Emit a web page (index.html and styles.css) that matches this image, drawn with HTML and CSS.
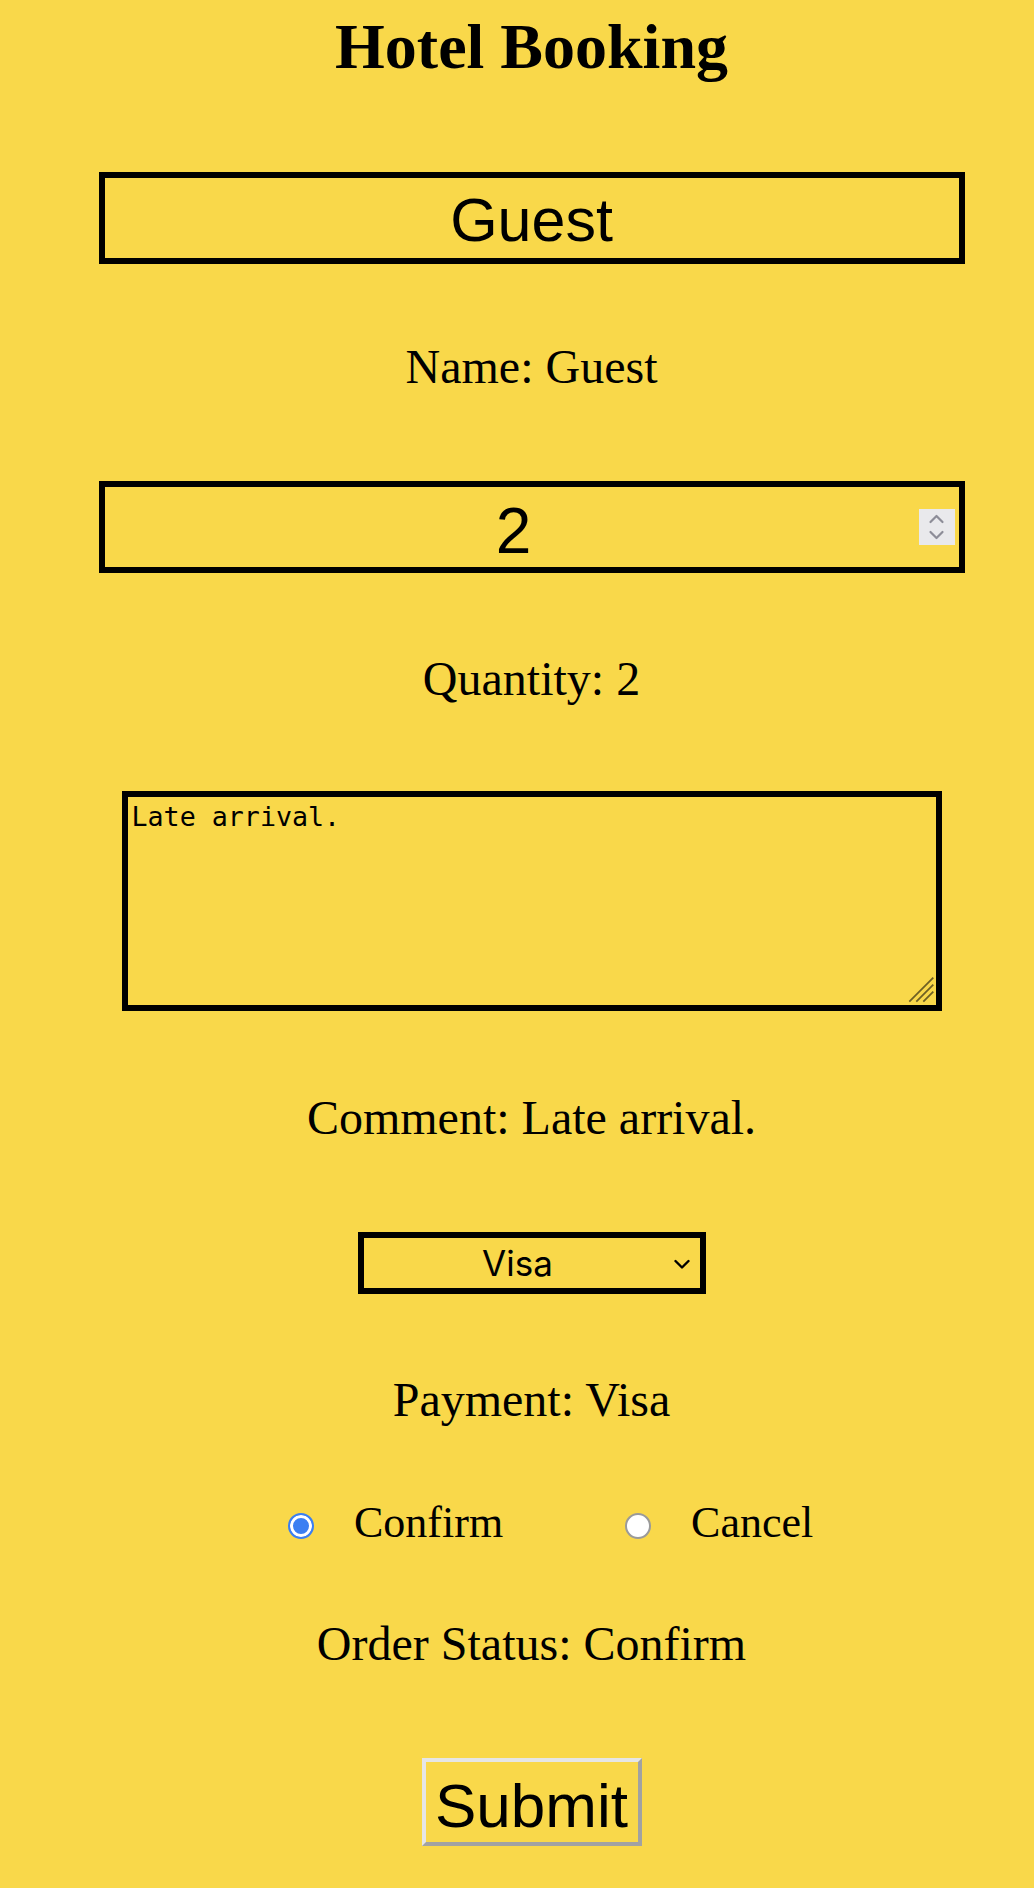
FILE: index.html
```html
<!DOCTYPE html>
<html lang="en">
<head>
<meta charset="utf-8">
<title>Hotel Booking</title>
<link rel="stylesheet" href="styles.css">
</head>
<body>
<div class="page">
  <h1 class="title">Hotel Booking</h1>

  <input class="field text-field" type="text" value="Guest">
  <p class="out out-name">Name: Guest</p>

  <div class="num-wrap">
    <input class="field num-field" type="number" value="2">
    <span class="spinner">
      <svg width="36" height="36" viewBox="0 0 36 36"><path d="M11.5 13 L17.5 7 L23.5 13" fill="none" stroke="#8d8d98" stroke-width="2.2" stroke-linecap="round" stroke-linejoin="round"/><path d="M11.5 23 L17.5 29 L23.5 23" fill="none" stroke="#8d8d98" stroke-width="2.2" stroke-linecap="round" stroke-linejoin="round"/></svg>
    </span>
  </div>
  <p class="out out-qty">Quantity: 2</p>

  <div class="ta-wrap">
    <textarea class="comment">Late arrival.</textarea>
    <svg class="grip" width="26" height="27" viewBox="0 0 26 27"><path d="M1.3 25.7 L25.3 1.7 M8.3 25.7 L25.3 8.7 M15.3 25.7 L25.3 15.7" stroke="#6f6024" stroke-width="1.8" fill="none"/></svg>
  </div>
  <p class="out out-comment">Comment: Late arrival.</p>

  <div class="sel-wrap">
    <select class="pay">
      <option selected>Visa</option>
      <option>MasterCard</option>
      <option>PayPal</option>
    </select>
    <svg class="chev" width="16" height="11" viewBox="0 0 16 11"><path d="M1.5 2 L8 8.5 L14.5 2" fill="none" stroke="#000" stroke-width="2.4" stroke-linecap="round" stroke-linejoin="round"/></svg>
  </div>
  <p class="out out-pay">Payment: Visa</p>

  <div class="radios">
    <label class="opt"><input class="radio" type="radio" name="status" checked><span class="opt-text">Confirm</span></label>
    <label class="opt opt-second"><input class="radio" type="radio" name="status"><span class="opt-text">Cancel</span></label>
  </div>
  <p class="out out-status">Order Status: Confirm</p>

  <button class="submit" type="button">Submit</button>
</div>
</body>
</html>
```

FILE: styles.css
```css
html, body {
  margin: 0;
  padding: 0;
  background: #f9d84a;
}

body {
  font-family: "Liberation Serif", "Times New Roman", serif;
  color: #000;
}

.page {
  box-sizing: border-box;
  width: 1005px;
  margin-left: 29px;
  display: flex;
  flex-direction: column;
  align-items: center;
  padding-bottom: 42px;
}

.title {
  margin: 10px 0 0;
  font-size: 64px;
  line-height: 74px;
  font-weight: bold;
}

.field {
  box-sizing: border-box;
  width: 866px;
  height: 92px;
  border: 6px solid #000;
  background: transparent;
  color: #000;
  font-family: "Liberation Sans", Arial, sans-serif;
  text-align: center;
  outline: none;
  margin: 0;
  display: block;
}

.text-field {
  margin-top: 88px;
  font-size: 61px;
  padding: 4px 0 0;
}

.out {
  margin: 0;
  font-size: 48px;
  line-height: 56px;
}

.out-name { margin-top: 75px; }
.out-qty { margin-top: 78px; }
.out-comment { margin-top: 79px; }
.out-pay { margin-top: 78px; }
.out-status { margin-top: 68px; }

.num-wrap {
  position: relative;
  margin-top: 86px;
}

.num-field {
  font-size: 64px;
  padding: 7px 36px 0 0;
  -moz-appearance: textfield;
}

.num-field::-webkit-inner-spin-button,
.num-field::-webkit-outer-spin-button {
  -webkit-appearance: none;
  margin: 0;
}

.spinner {
  position: absolute;
  right: 10px;
  top: 28px;
  width: 36px;
  height: 36px;
  background: #e9e9ec;
  display: flex;
}

.ta-wrap {
  position: relative;
  margin-top: 84px;
}

.comment {
  box-sizing: border-box;
  display: block;
  width: 820px;
  height: 220px;
  margin: 0;
  border: 6px solid #000;
  padding: 4px;
  background: transparent;
  color: #000;
  font-family: "DejaVu Sans Mono", "Liberation Mono", monospace;
  font-size: 26.67px;
  resize: none;
  outline: none;
}

.grip {
  position: absolute;
  right: 8px;
  bottom: 8px;
}

.sel-wrap {
  position: relative;
  margin-top: 86px;
}

.pay {
  box-sizing: border-box;
  display: block;
  width: 348px;
  height: 62px;
  margin: 0;
  border: 6px solid #000;
  border-radius: 0;
  padding: 0 28px 0 0;
  background: transparent;
  color: #000;
  font-family: Inter, "Liberation Sans", sans-serif;
  font-size: 35px;
  text-align: center;
  text-align-last: center;
  -webkit-appearance: none;
  appearance: none;
  outline: none;
}

.chev {
  position: absolute;
  left: 316px;
  top: 27px;
  pointer-events: none;
}

.radios {
  align-self: stretch;
  display: flex;
  padding-left: 259px;
  margin-top: 70px;
}

.opt {
  display: flex;
  align-items: flex-start;
  font-size: 44px;
  line-height: 50px;
}

.opt-second {
  margin-left: 122px;
}

.radio {
  -webkit-appearance: none;
  appearance: none;
  box-sizing: border-box;
  width: 26px;
  height: 26px;
  margin: 15px 0 0;
  border-radius: 50%;
  border: 2px solid #9a9a9a;
  background: #fff;
}

.radio:checked {
  border-color: #3b7ff2;
  background: #3b7ff2;
  box-shadow: inset 0 0 0 3px #fff;
}

.opt-text {
  margin-left: 40px;
}

.submit {
  box-sizing: border-box;
  margin-top: 86px;
  width: 220px;
  height: 88px;
  padding: 7px 0 0;
  border: 4px solid;
  border-color: #e6e6e6 #a2a2a2 #a2a2a2 #e6e6e6;
  background: transparent;
  color: #000;
  font-family: "Liberation Sans", Arial, sans-serif;
  font-size: 62px;
  line-height: normal;
}
```
